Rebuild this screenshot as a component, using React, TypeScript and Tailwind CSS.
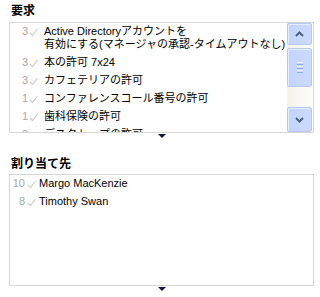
import React from "react";

const FONT = { fontFamily: '"Liberation Sans", "Noto Sans CJK JP", sans-serif' };

function Check() {
  return (
    <svg width="9" height="9" viewBox="0 0 9 9" className="block">
      <polyline points="1,5 3.5,7.5 8.5,1" fill="none" stroke="#c9cfc9" strokeWidth="1.2" />
    </svg>
  );
}

type Row = { n: string; lines: string[] };

const reqRows: Row[] = [
  { n: "3", lines: ["Active Directoryアカウントを", "有効にする(マネージャの承認-タイムアウトなし)"] },
  { n: "3", lines: ["本の許可 7x24"] },
  { n: "3", lines: ["カフェテリアの許可"] },
  { n: "1", lines: ["コンファレンスコール番号の許可"] },
  { n: "1", lines: ["歯科保険の許可"] },
  { n: "3", lines: ["デスクトップの許可"] },
];

const asgRows: Row[] = [
  { n: "10", lines: ["Margo MacKenzie"] },
  { n: "8", lines: ["Timothy Swan"] },
];

function Triangle() {
  return (
    <div className="flex justify-center pl-[9px] pr-[6px]">
      <div className="w-0 h-0 border-l-[4px] border-r-[4px] border-t-[4px] border-l-transparent border-r-transparent border-t-[#14144a]" />
    </div>
  );
}

function ScrollButton({ up }: { up: boolean }) {
  return (
    <div
      className={`${up ? "h-[22px]" : "h-[25px]"} w-full rounded-[2px] border border-[#b7c8f3] bg-gradient-to-r from-[#c4d3fb] to-[#ccdafd] flex items-center justify-center shadow-[inset_1px_1px_0_#e4ecff]`}
    >
      <svg width="9" height="6" viewBox="0 0 9 6">
        <polyline
          points={up ? "1,5 4.5,1.5 8,5" : "1,1 4.5,4.5 8,1"}
          fill="none"
          stroke="#4d6185"
          strokeWidth="2"
        />
      </svg>
    </div>
  );
}

function Scrollbar() {
  return (
    <div className="w-[25px] mr-[1px] flex flex-col bg-gradient-to-r from-[#f3f1ea] to-[#fdfdfb]">
      <ScrollButton up />
      <div className="h-[3px]" />
      <div className="h-[39px] rounded-[2px] border border-[#b7c8f3] bg-gradient-to-r from-[#c4d3fb] to-[#ccdafd] shadow-[inset_1px_1px_0_#e4ecff] flex flex-col items-center justify-center gap-[1px]">
        <div className="w-[6px] h-[1px] bg-[#eef3ff]" />
        <div className="w-[6px] h-[1px] bg-[#8faae6]" />
        <div className="w-[6px] h-[1px] bg-[#eef3ff]" />
        <div className="w-[6px] h-[1px] bg-[#8faae6]" />
        <div className="w-[6px] h-[1px] bg-[#eef3ff]" />
        <div className="w-[6px] h-[1px] bg-[#8faae6]" />
      </div>
      <div className="flex-1" />
      <ScrollButton up={false} />
    </div>
  );
}

function ListRows({ rows, numW, checkMl, textMl }: { rows: Row[]; numW: string; checkMl: string; textMl: string }) {
  return (
    <div className="flex-1 min-w-0 overflow-hidden">
      {rows.map((r, i) => (
        <div key={i} className="flex pt-[2px] pb-[3px] leading-[13px] text-[11px]">
          <div className={`${numW} shrink-0 text-right text-[#a6a6a6]`}>{r.n}</div>
          <div className={`${checkMl} shrink-0 pt-[3px]`}>
            <Check />
          </div>
          <div className={`${textMl} text-black whitespace-nowrap`}>
            {r.lines.map((l, j) => (
              <div key={j}>{l}</div>
            ))}
          </div>
        </div>
      ))}
    </div>
  );
}

export default function App() {
  return (
    <div className="w-[320px] h-[297px] bg-white overflow-hidden" style={FONT}>
      <div className="h-[22px] flex items-center pl-[11px] text-[12px] font-bold text-black">要求</div>
      <div className="mx-[6px] ml-[9px] h-[111px] border border-[#d6d6d6] flex">
        <ListRows rows={reqRows} numW="w-[18px]" checkMl="ml-[1px]" textMl="ml-[6px]" />
        <Scrollbar />
      </div>
      <div className="pt-[1px] h-[5px]">
        <Triangle />
      </div>
      <div className="h-[36px] pt-[16px] flex items-center pl-[11px] text-[12px] font-bold text-black">割り当て先</div>
      <div className="ml-[9px] mr-[6px] h-[112px] border border-[#d6d6d6] flex">
        <ListRows rows={asgRows} numW="w-[15px]" checkMl="ml-[2px]" textMl="ml-[3px]" />
      </div>
      <div className="pt-[1px]">
        <Triangle />
      </div>
    </div>
  );
}
